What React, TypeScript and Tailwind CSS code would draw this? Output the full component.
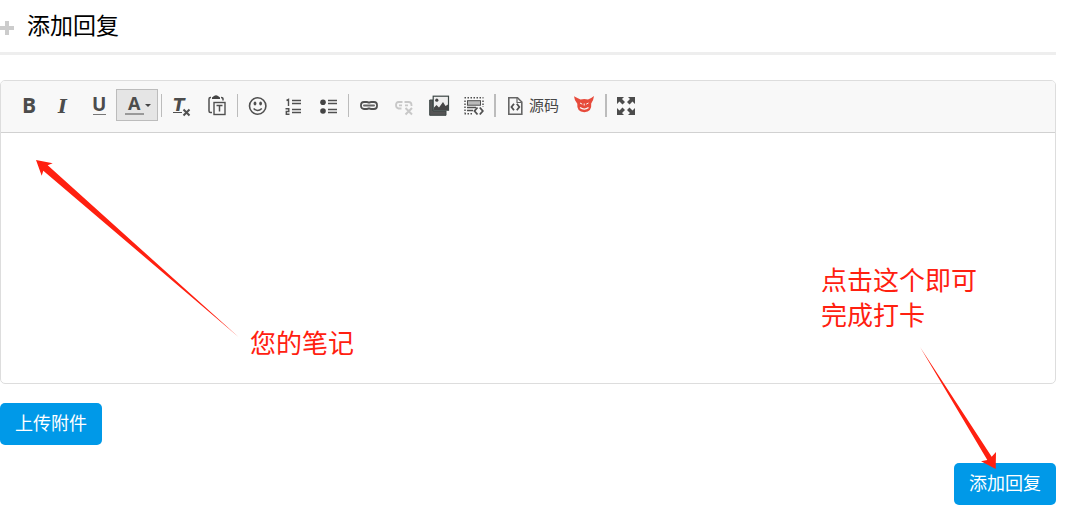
import type { ReactNode } from "react";

interface ToolButtonProps {
  label: string;
  children: ReactNode;
  disabled?: boolean;
}

function ToolButton({ label, children, disabled }: ToolButtonProps) {
  return (
    <button
      type="button"
      title={label}
      aria-label={label}
      disabled={disabled}
      className="flex h-8 w-[35px] shrink-0 items-center justify-center"
    >
      <svg viewBox="0 0 19 20" className="h-5 w-[19px] overflow-visible" fill="none" stroke="#505050">
        {children}
      </svg>
    </button>
  );
}

function Separator({ wide }: { wide?: boolean }) {
  return <span className={`ml-[3px] mr-[2px] h-[23px] shrink-0 bg-[#bcbcbc] ${wide ? "w-[2px]" : "w-px"}`} />;
}

function Toolbar() {
  return (
    <div
      role="toolbar"
      aria-label="编辑器工具栏"
      className="flex h-[52px] items-center rounded-t border-b border-[#d1d1d1] bg-[#f8f8f8] pb-[3px] pl-[10px]"
    >
      <ToolButton label="加粗">
        <text x="3" y="18" fontSize="21" fontWeight="700" fill="#4c4c4c" stroke="none" fontFamily="Open Sans">
          B
        </text>
      </ToolButton>
      <ToolButton label="倾斜">
        <text x="4" y="18" fontSize="19" fontWeight="700" fontStyle="italic" fill="#4c4c4c" stroke="none" fontFamily="DejaVu Serif">
          I
        </text>
      </ToolButton>
      <ToolButton label="下划线">
        <text x="3" y="16" fontSize="19" fontWeight="700" fill="#4c4c4c" stroke="none" fontFamily="Open Sans">
          U
        </text>
        <path d="M4 19.5H17" stroke="#777" />
      </ToolButton>
      <button
        type="button"
        title="文本颜色"
        aria-label="文本颜色"
        className="flex h-8 w-[42px] shrink-0 items-center justify-center border border-[#bcbcbc] bg-[#e5e5e5]"
      >
        <svg viewBox="0 0 28 20" className="h-5 w-7 overflow-visible">
          <text x="5" y="15" fontSize="18" fontWeight="700" fill="#4c4c4c" fontFamily="Open Sans">
            A
          </text>
          <path d="M2 18H21V20H2z" fill="#999" />
          <path d="M22 9H28L25 12z" fill="#444" />
        </svg>
      </button>

      <Separator />

      <ToolButton label="清除格式">
        <text x="1" y="16" fontSize="17" fontWeight="700" fontStyle="italic" fill="#4c4c4c" stroke="none" fontFamily="DejaVu Sans">
          T
        </text>
        <path d="M1 17.5H10" />
        <path d="M11.5 14.5L17.5 20.5M17.5 14.5L11.5 20.5" strokeWidth="2" />
      </ToolButton>
      <ToolButton label="粘贴为无格式文本">
        <path d="M4 2.5H3.5Q2 2.5 2 4V16Q2 17.5 3.5 17.5H5M14 2.5Q16 2.5 16 4V5.5" strokeWidth="1.5" />
        <path d="M5 4V2.5L7 1Q9 -0.5 11 1L13 2.5V4z" fill="#444" stroke="none" />
        <rect x="7" y="7.5" width="11" height="12" strokeWidth="1.4" />
        <path d="M9.5 10.5H15.5M12.5 10.5V16.5" strokeWidth="1.5" />
      </ToolButton>

      <Separator />

      <ToolButton label="表情符">
        <circle cx="9.7" cy="11" r="8.2" strokeWidth="1.6" />
        <ellipse cx="7" cy="8.5" rx="1.4" ry="1.9" fill="#505050" stroke="none" />
        <ellipse cx="12.6" cy="8.5" rx="1.4" ry="1.9" fill="#505050" stroke="none" />
        <path d="M5.6 13.5Q9.7 17.6 13.8 13.5" strokeWidth="1.5" />
      </ToolButton>
      <ToolButton label="编号列表">
        <path d="M3.5 5.5L5.5 4.5V11M2.5 13.8H5.8V16.5H3.3V19.3H6.5" strokeWidth="1.4" />
        <path d="M9 5.5H18M9 8.5H18M9 14.5H18M9 17.5H18" strokeWidth="1.4" />
      </ToolButton>
      <ToolButton label="项目列表">
        <circle cx="5" cy="7.3" r="2.8" fill="#444" stroke="none" />
        <circle cx="5" cy="16" r="2.8" fill="#444" stroke="none" />
        <path d="M10 5.5H19M10 8.5H19M10 14.5H19M10 17.5H19" strokeWidth="1.4" />
      </ToolButton>

      <Separator />

      <ToolButton label="超链接">
        <rect x="2" y="7" width="8.5" height="7" rx="3" strokeWidth="1.8" />
        <rect x="9.5" y="7" width="8.5" height="7" rx="3" strokeWidth="1.8" />
        <path d="M5 10.5H15" stroke="#f8f8f8" strokeWidth="4" />
        <path d="M5 10.5H15" stroke="#666" strokeWidth="2" strokeLinecap="round" />
      </ToolButton>
      <ToolButton label="取消超链接" disabled>
        <g stroke="#c8c8c8">
          <path d="M8.5 7H4.5Q2 7 2 10T4.5 13.5H7.5M10.5 7H14.5Q17.5 7 17.5 10V11" strokeWidth="1.8" />
          <path d="M5 10.3H8M11 10.3H14" strokeWidth="1.8" />
          <path d="M11.5 13L18 19.5M18 13L11.5 19.5" strokeWidth="2" />
        </g>
      </ToolButton>
      <ToolButton label="图像">
        <path d="M0.7 5V20.3H17V16H4V5z" fill="#555" stroke="#3d4745" />
        <rect x="4.2" y="1.2" width="15.3" height="14" fill="#eee" stroke="#3d4745" strokeWidth="1.2" />
        <path d="M5 15V12.5L7.5 10L10 12.5L14 7L16.5 11L19 9.5V15z" fill="#444" stroke="none" />
        <circle cx="7.8" cy="5.2" r="1.6" fill="#444" stroke="none" />
      </ToolButton>
      <ToolButton label="插入代码段">
        <path d="M0.5 2.8H19.5M0.5 18.8H9" strokeWidth="1.5" strokeDasharray="1.5 1.5" />
        <path d="M1 5.5V18M19 5.5V12" strokeWidth="1.5" strokeDasharray="1.5 1.5" />
        <rect x="3.5" y="5.7" width="13" height="4.5" fill="#bbb" />
        <path d="M3 12.5H12M3 15.5H9" strokeWidth="1.5" />
        <path d="M13.5 12.5L10.5 16L13.5 19.5M15.8 12.5L18.8 16L15.8 19.5" strokeWidth="1.8" />
      </ToolButton>

      <Separator wide />

      <button
        type="button"
        title="源码"
        className="flex h-8 w-[69px] shrink-0 items-center gap-1 pl-2 text-[15px] leading-5 text-[#484848]"
      >
        <svg viewBox="0 0 19 20" className="h-5 w-[19px]" fill="none" stroke="#666">
          <path d="M2.8 2.8H11.5L15.8 7V19.2H2.8z" strokeWidth="1.6" />
          <path d="M11 3V7.5H15.5" strokeWidth="1.2" />
          <path d="M8 8.8L5.5 12L8 15.2M10.8 8.8L13.3 12L10.8 15.2" stroke="#505050" strokeWidth="1.8" />
        </svg>
        源码
      </button>
      <ToolButton label="小恶魔">
        <path
          d="M-1 1.3Q2.5 3.3 5.5 4.6Q9.3 3.4 13 4.6Q16.2 3.3 19 1Q18.6 5 16.2 8.5Q17.2 16.8 9.3 17.2Q1.4 16.8 2.3 8.8Q-0.6 5.8 -1 1.3z"
          fill="#e74b3c"
          stroke="none"
        />
        <path d="M5 8L7.3 9.2M13.5 8L11.2 9.2M9.2 8.5V10.5" stroke="#f8f8f8" strokeWidth="1" />
        <path d="M5 12.6Q9.3 15.8 13.5 12.6" stroke="#f8f8f8" strokeWidth="1.3" />
      </ToolButton>

      <Separator wide />

      <ToolButton label="全屏">
        <path d="M0 2H7L5 4L8 7L5.5 9.5L2.5 6.5L0 9z" fill="#4c4c4c" stroke="none" />
        <path d="M18 2H11L13 4L10 7L12.5 9.5L15.5 6.5L18 9z" fill="#4c4c4c" stroke="none" />
        <path d="M0 20H7L5 18L8 15L5.5 12.5L2.5 15.5L0 13z" fill="#4c4c4c" stroke="none" />
        <path d="M18 20H11L13 18L10 15L12.5 12.5L15.5 15.5L18 13z" fill="#4c4c4c" stroke="none" />
      </ToolButton>
    </div>
  );
}

function Notes() {
  return (
    <div className="pointer-events-none absolute inset-0 text-[26px] leading-[35px] text-[#ff2010]">
      {/* Arrow into the editor */}
      <svg viewBox="0 0 204 178" className="absolute left-[36px] top-[160px] h-[178px] w-[204px]">
        <path d="M0 0L16.7 3.3L11.7 5.3L202.5 177L7.3 10.7L5.7 15.7z" fill="#ff2010" />
      </svg>
      <p className="absolute left-[250px] top-[324px]">您的笔记</p>

      {/* Arrow onto the submit button */}
      <p className="absolute right-[79px] top-[261px]">
        点击这个即可
        <br />
        完成打卡
      </p>
      <svg viewBox="0 0 80 123" className="absolute right-[56px] top-[347px] h-[123px] w-20">
        <path d="M0 0L71.7 109.7L76 105L75.7 122L61 114.3L67.3 113z" fill="#ff2010" />
      </svg>
    </div>
  );
}

export default function App() {
  return (
    <main className="bg-white pr-[9px] font-['Noto_Sans_CJK_SC',sans-serif] text-black">
      <form className="relative" onSubmit={(e) => e.preventDefault()}>
        <h2 className="flex h-[55px] items-center gap-[13px] border-b-[3px] border-[#eee] pb-1 text-[23px] leading-8">
          <svg viewBox="0 0 14 14" className="mt-2 h-[14px] w-[14px]">
            <path d="M5 0H9V5H14V9H9V14H5V9H0V5H5z" fill="#ccc" />
          </svg>
          <label htmlFor="reply">添加回复</label>
        </h2>

        <div className="mt-[25px] rounded-[5px] border border-[#ddd]">
          <Toolbar />
          <textarea id="reply" className="block h-[250px] w-full resize-none rounded-b p-4 text-base outline-none" />
        </div>

        <button type="button" className="mt-[19px] block h-[42px] rounded-[5px] bg-[#0099e8] px-[15px] pb-1 text-lg leading-7 text-white">
          上传附件
        </button>
        <button type="submit" className="ml-auto mt-[18px] block h-[42px] rounded-[5px] bg-[#0099e8] px-[15px] pb-1 text-lg leading-7 text-white">
          添加回复
        </button>

        <Notes />
      </form>
    </main>
  );
}
